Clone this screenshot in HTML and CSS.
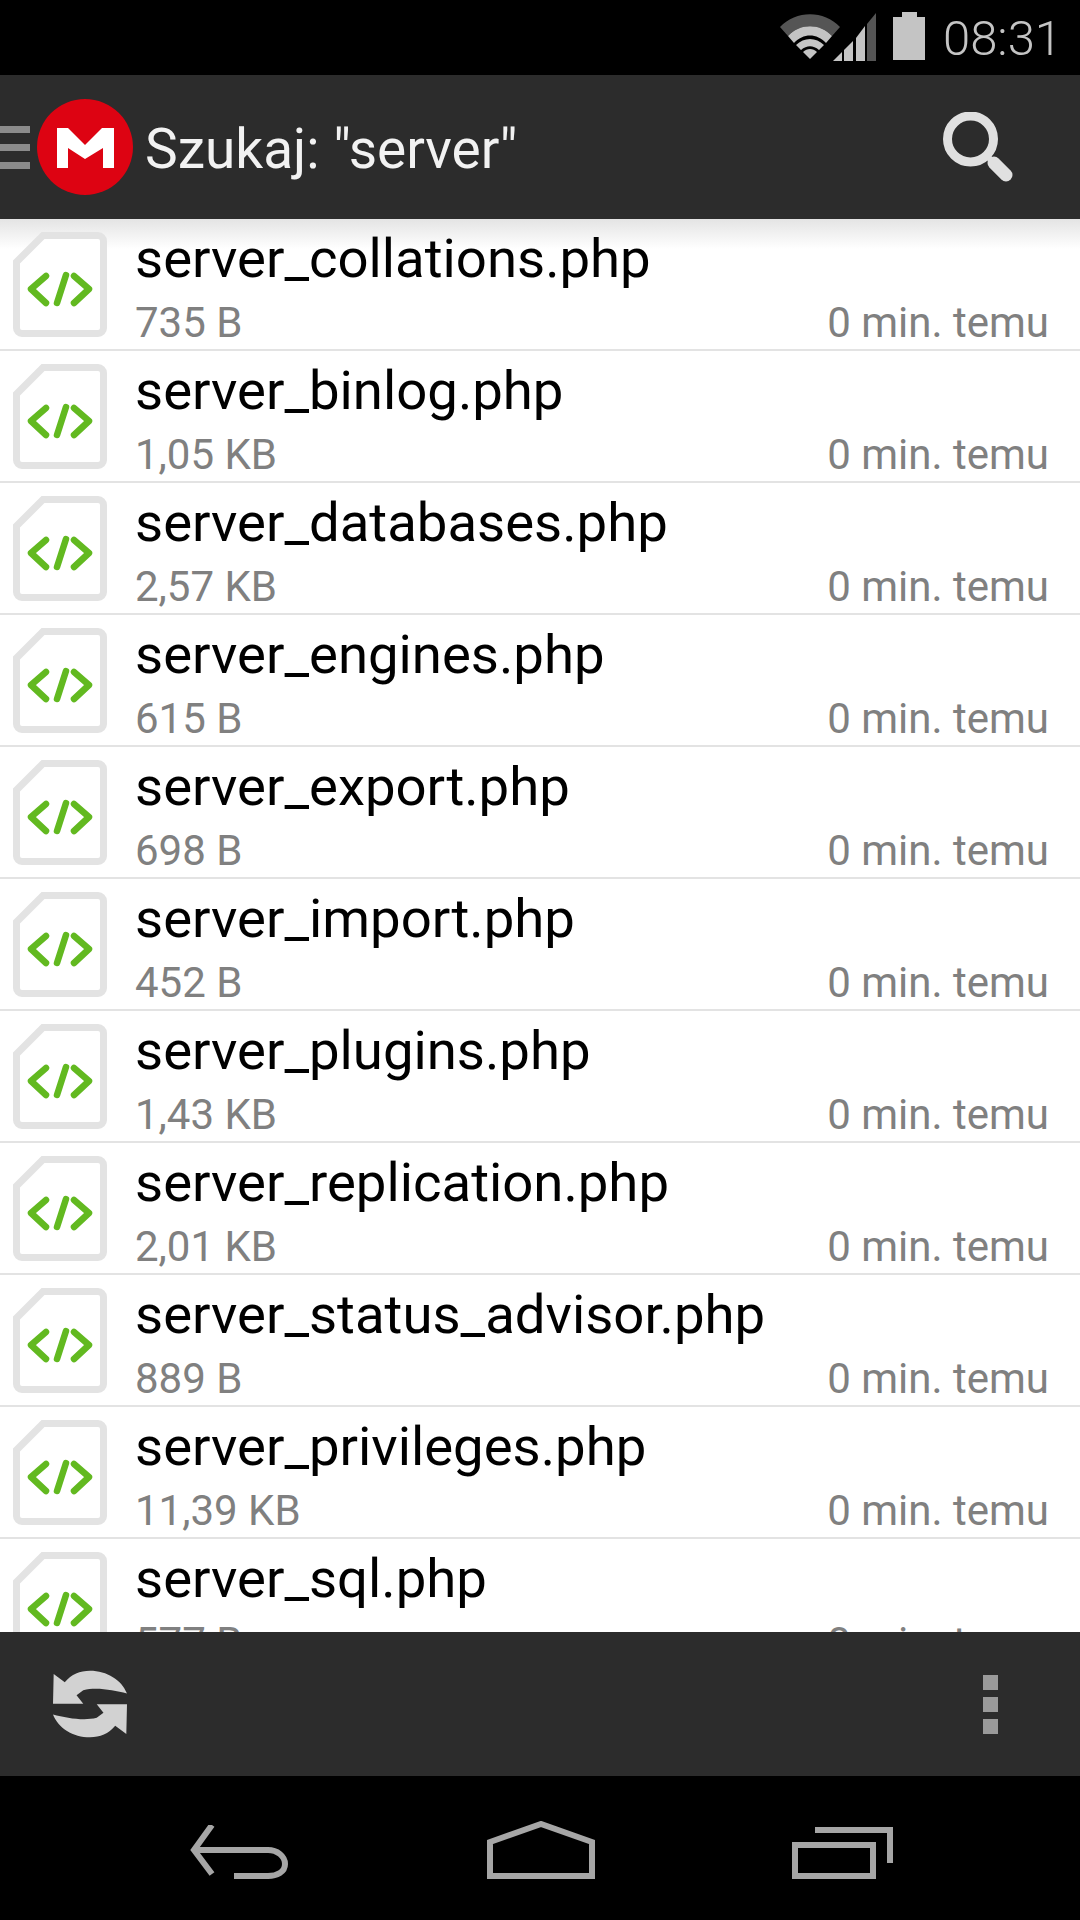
FILE: index.html
```html
<!DOCTYPE html>
<html lang="pl">
<head>
    <meta charset="UTF-8">
    <meta name="viewport" content="width=device-width, initial-scale=1.0">
    <title>Szukaj</title>
    <link rel="stylesheet" href="styles.css">
</head>
<body>
    <svg class="defs" width="0" height="0">
        <symbol id="file-php" viewBox="0 0 94 105">
            <path d="M30 3.500H85a5.500 5.500 0 0 1 5.500 5.500V96a5.500 5.500 0 0 1-5.500 5.500H9A5.500 5.500 0 0 1 3.500 96V30Z" fill="#fff" stroke="#e3e3e3" stroke-width="7"/>
            <path d="M33 44 18 57l15 14M53 43 44 71M61 44l15 13-15 14" fill="none" stroke="#62b920" stroke-width="6.500" stroke-linecap="round" stroke-linejoin="round"/>
        </symbol>
    </svg>

    <div class="phone">
        <div class="status-bar">
            <svg class="wifi" width="60" height="46" viewBox="0 0 60 46">
                <path d="M0 13C16 -4 44 -4 60 13L52 22C40 9 20 9 8 22Z" fill="#555"/>
                <path d="M8 22C20 9 40 9 52 22L46 29C37 19 23 19 14 29Z" fill="#c4c4c4"/>
                <path d="M16 31C24 23 36 23 44 31L39 36C33 31 27 31 21 36Z" fill="#c4c4c4"/>
                <path d="M23 38C27 34 33 34 37 38L30 45Z" fill="#c4c4c4"/>
            </svg>
            <svg class="signal" width="44" height="48" viewBox="0 0 44 48">
                <path d="M0 48 9 39V48Z" fill="#c4c4c4"/>
                <path d="M11 37 20 28V48H11Z" fill="#c4c4c4"/>
                <path d="M23 25 32 13V48H23Z" fill="#c4c4c4"/>
                <path d="M34 11 43 0V48H34Z" fill="#555"/>
            </svg>
            <svg class="battery" width="32" height="48" viewBox="0 0 32 48">
                <path d="M9 0H24V5H32V48H0V5H9Z" fill="#c4c4c4"/>
            </svg>
            <span class="clock">08:31</span>
        </div>

        <header class="action-bar">
            <div class="burger"><i></i><i></i><i></i></div>
            <svg class="logo" width="96" height="96" viewBox="0 0 96 96">
                <circle cx="48" cy="48" r="48" fill="#dd0312"/>
                <path d="M20 69V29H31L48 46 65 29H77V69H66V49L48 60 31 49V69Z" fill="#fff"/>
            </svg>
            <div class="title">Szukaj: "server"</div>
            <svg class="search" width="70" height="70" viewBox="0 0 70 70">
                <circle cx="27.500" cy="27" r="23" fill="none" stroke="#e0e0e0" stroke-width="9"/>
                <path d="M44 44 51 51" fill="none" stroke="#e0e0e0" stroke-width="6"/>
                <path d="M51 51 63 63" fill="none" stroke="#e0e0e0" stroke-width="13" stroke-linecap="round"/>
            </svg>
        </header>

        <main class="list">
            <div class="row">
                <svg class="file-icon"><use href="#file-php"/></svg>
                <div class="info"><div class="name">server_collations.php</div><div class="meta"><span>735 B</span><span>0 min. temu</span></div></div>
            </div>
            <div class="row">
                <svg class="file-icon"><use href="#file-php"/></svg>
                <div class="info"><div class="name">server_binlog.php</div><div class="meta"><span>1,05 KB</span><span>0 min. temu</span></div></div>
            </div>
            <div class="row">
                <svg class="file-icon"><use href="#file-php"/></svg>
                <div class="info"><div class="name">server_databases.php</div><div class="meta"><span>2,57 KB</span><span>0 min. temu</span></div></div>
            </div>
            <div class="row">
                <svg class="file-icon"><use href="#file-php"/></svg>
                <div class="info"><div class="name">server_engines.php</div><div class="meta"><span>615 B</span><span>0 min. temu</span></div></div>
            </div>
            <div class="row">
                <svg class="file-icon"><use href="#file-php"/></svg>
                <div class="info"><div class="name">server_export.php</div><div class="meta"><span>698 B</span><span>0 min. temu</span></div></div>
            </div>
            <div class="row">
                <svg class="file-icon"><use href="#file-php"/></svg>
                <div class="info"><div class="name">server_import.php</div><div class="meta"><span>452 B</span><span>0 min. temu</span></div></div>
            </div>
            <div class="row">
                <svg class="file-icon"><use href="#file-php"/></svg>
                <div class="info"><div class="name">server_plugins.php</div><div class="meta"><span>1,43 KB</span><span>0 min. temu</span></div></div>
            </div>
            <div class="row">
                <svg class="file-icon"><use href="#file-php"/></svg>
                <div class="info"><div class="name">server_replication.php</div><div class="meta"><span>2,01 KB</span><span>0 min. temu</span></div></div>
            </div>
            <div class="row">
                <svg class="file-icon"><use href="#file-php"/></svg>
                <div class="info"><div class="name">server_status_advisor.php</div><div class="meta"><span>889 B</span><span>0 min. temu</span></div></div>
            </div>
            <div class="row">
                <svg class="file-icon"><use href="#file-php"/></svg>
                <div class="info"><div class="name">server_privileges.php</div><div class="meta"><span>11,39 KB</span><span>0 min. temu</span></div></div>
            </div>
            <div class="row">
                <svg class="file-icon"><use href="#file-php"/></svg>
                <div class="info"><div class="name">server_sql.php</div><div class="meta"><span>577 B</span><span>0 min. temu</span></div></div>
            </div>
        </main>

        <div class="bottom-bar">
            <svg class="refresh" width="74" height="68" viewBox="0 0 220 202">
                <path d="M2 12 35 36C55 12 80 2 110 2 160 2 205 30 220 70 180 60 130 50 90 60L70 75 90 100H0Z" fill="#d2d2d2"/>
                <path d="M2 12 35 36C55 12 80 2 110 2 160 2 205 30 220 70 180 60 130 50 90 60L70 75 90 100H0Z" fill="#d2d2d2" transform="rotate(180 110 101)"/>
            </svg>
            <div class="dots"><i></i><i></i><i></i></div>
        </div>

        <nav class="nav-bar">
            <svg width="100" height="54" viewBox="0 0 100 54">
                <path d="M22 0 4 25 22 49M4 25H78C87 25 95 31 95 39S87 51 78 51H44" fill="none" stroke="#a6a6a6" stroke-width="6"/>
            </svg>
            <svg width="108" height="58" viewBox="0 0 108 58">
                <path d="M3 55V21L54 3 105 21V55Z" fill="none" stroke="#a6a6a6" stroke-width="6"/>
            </svg>
            <svg width="102" height="52" viewBox="0 0 102 52">
                <path d="M23 3H98V36M3 18H81V49H3Z" fill="none" stroke="#a6a6a6" stroke-width="6"/>
            </svg>
        </nav>
    </div>
</body>
</html>
```

FILE: styles.css
```css
* {
    box-sizing: border-box;
}
body {
    margin: 0;
    font-family: Roboto, "Liberation Sans", sans-serif;
    background: #000;
}
.defs {
    position: absolute;
}
.phone {
    width: 1080px;
    height: 1920px;
    display: flex;
    flex-direction: column;
    overflow: hidden;
}

.status-bar {
    height: 75px;
    flex: none;
    background: #000;
    display: flex;
    align-items: flex-start;
    padding: 12px 18px 0 0;
    justify-content: flex-end;
}
.wifi {
    margin-top: 2px;
    margin-right: -7px;
}
.signal {
    margin-top: 1px;
}
.battery {
    margin-left: 16px;
}
.clock {
    margin-left: 18px;
    font-size: 49px;
    font-weight: 300;
    line-height: 54px;
    color: #c4c4c4;
}

.action-bar {
    height: 144px;
    flex: none;
    background: #2c2c2c;
    display: flex;
    align-items: center;
}
.burger {
    width: 30px;
    display: flex;
    flex-direction: column;
    gap: 11px;
    margin-right: 7px;
}
.burger i {
    display: block;
    height: 7px;
    background: #8b8b8b;
}
.title {
    margin-left: 12px;
    padding-top: 4px;
    font-size: 55px;
    color: #f2f2f2;
}
.search {
    margin-left: auto;
    margin-right: 67px;
}

.list {
    flex: 1;
    min-height: 0;
    overflow: hidden;
    background: #fff;
    position: relative;
}
.list::before {
    content: "";
    position: absolute;
    top: 0;
    left: 0;
    right: 0;
    height: 30px;
    background: linear-gradient(#e4e4e4, rgba(255, 255, 255, 0));
}
.row {
    height: 132px;
    flex: none;
    display: flex;
    position: relative;
    padding: 13px 31px 0 13px;
    border-bottom: 2px solid #e3e3e3;
}
.file-icon {
    width: 94px;
    height: 105px;
    flex: none;
}
.info {
    flex: 1;
    margin-left: 28px;
    min-width: 0;
}
.name {
    font-size: 54.500px;
    line-height: 64px;
    margin-top: -6px;
    color: #000;
}
.meta {
    display: flex;
    justify-content: space-between;
    font-size: 42px;
    line-height: 50px;
    margin-top: 8px;
    color: #808080;
}

.bottom-bar {
    height: 144px;
    flex: none;
    background: #2c2c2c;
    display: flex;
    align-items: center;
    justify-content: space-between;
    padding: 0 82px 0 53px;
}
.dots {
    display: flex;
    flex-direction: column;
    gap: 7px;
}
.dots i {
    display: block;
    width: 15px;
    height: 15px;
    background: #9a9a9a;
}

.nav-bar {
    height: 144px;
    flex: none;
    background: #000;
    display: flex;
    align-items: flex-end;
    padding: 0 186px 41px 190px;
    justify-content: space-between;
}
```
